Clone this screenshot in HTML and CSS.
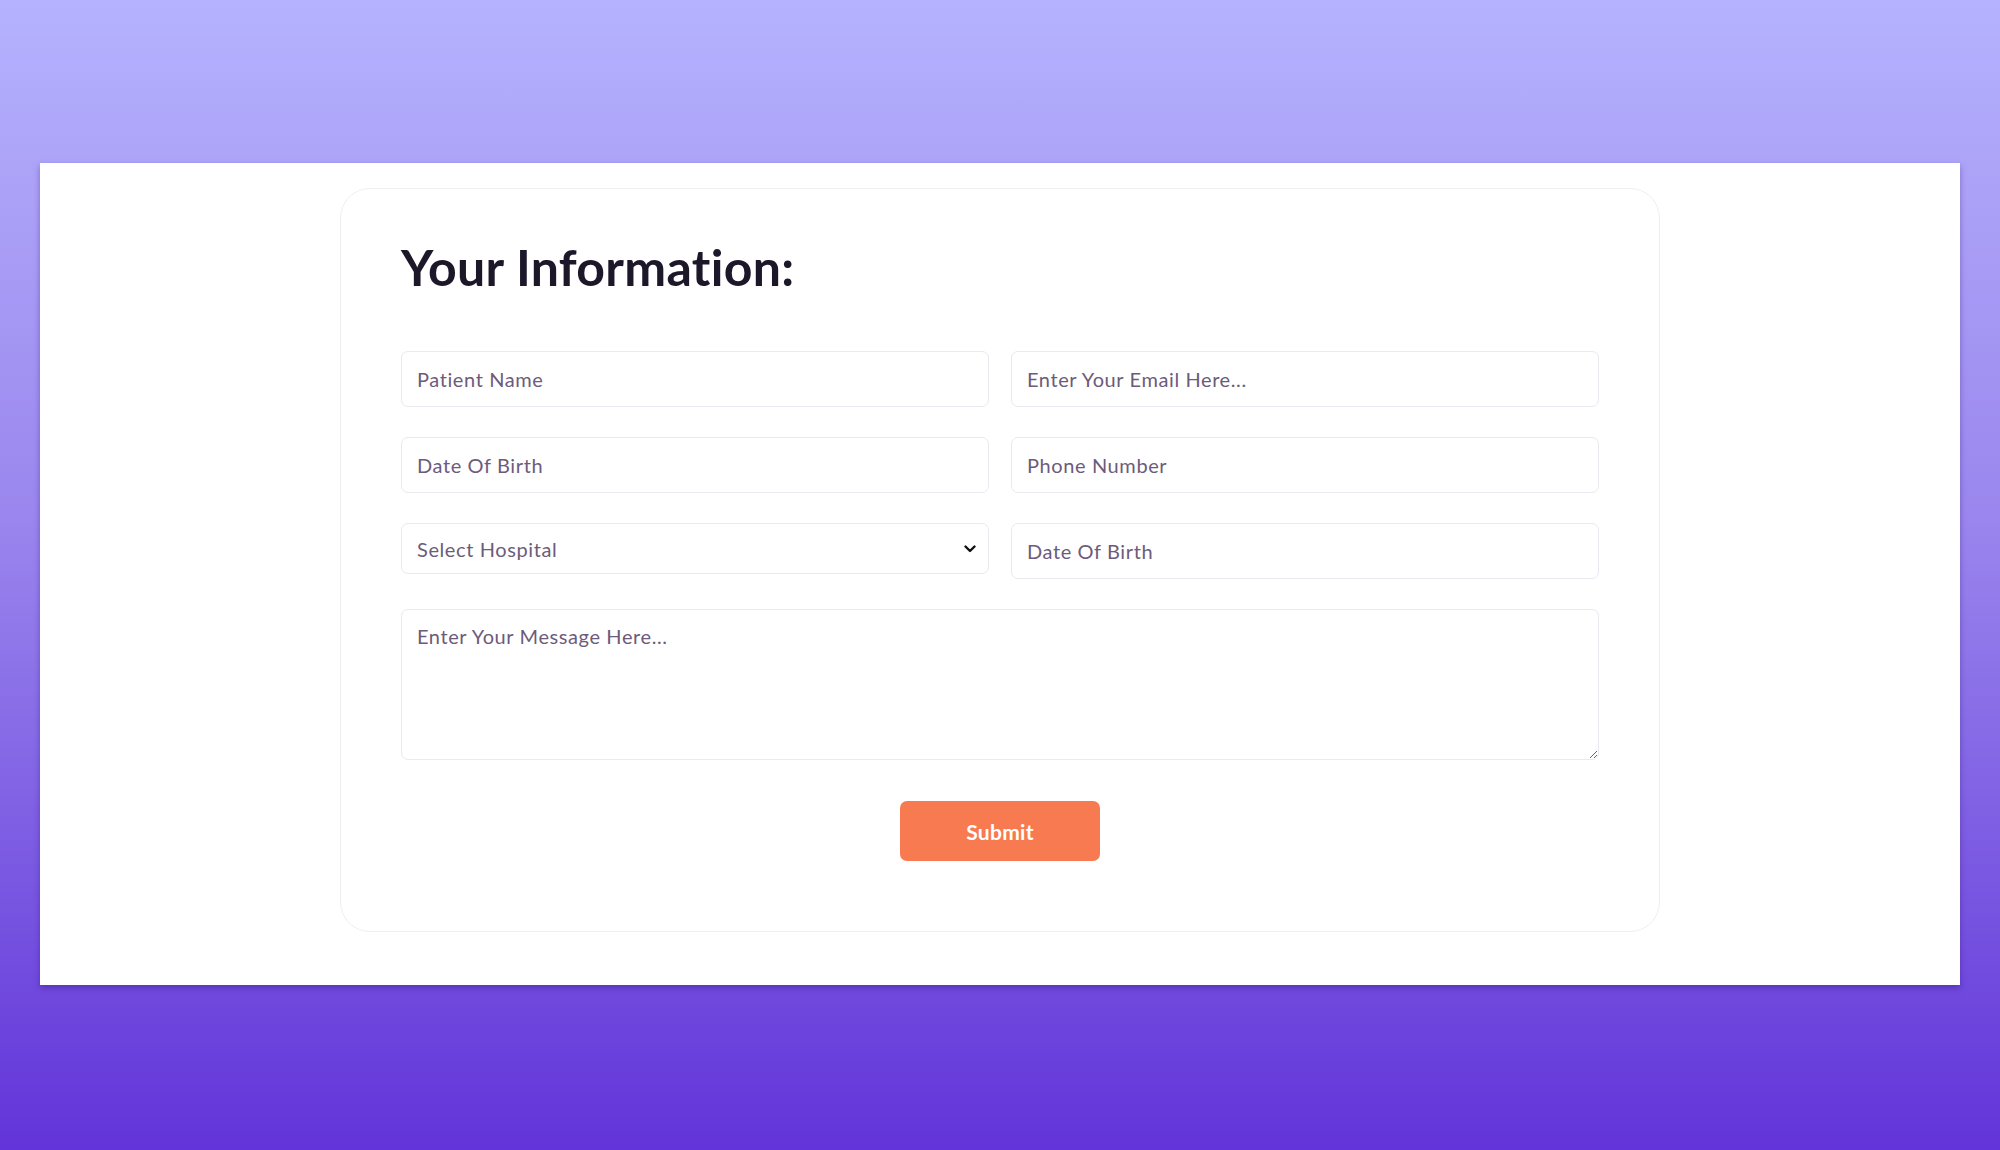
FILE: index.html
```html
<!DOCTYPE html>
<html lang="en">
<head>
<meta charset="utf-8">
<title>Your Information</title>
<link rel="stylesheet" href="styles.css">
</head>
<body>
<div class="page">
  <main class="panel">
    <form class="card">
      <h1 class="title">Your Information:</h1>
      <div class="fields">
        <input class="field" type="text" placeholder="Patient Name">
        <input class="field" type="email" placeholder="Enter Your Email Here...">
        <input class="field" type="text" placeholder="Date Of Birth">
        <input class="field" type="text" placeholder="Phone Number">
        <div class="select-wrap">
          <select class="field select">
            <option>Select Hospital</option>
          </select>
          <svg class="chevron" width="12" height="8" viewBox="0 0 12 8"><path d="M1.5 1.5 L6 6 L10.5 1.5" fill="none" stroke="#111" stroke-width="2.4" stroke-linecap="round" stroke-linejoin="round"/></svg>
        </div>
        <input class="field" type="text" placeholder="Date Of Birth">
        <textarea class="field message" placeholder="Enter Your Message Here..."></textarea>
      </div>
      <div class="actions">
        <button class="submit" type="button">Submit</button>
      </div>
    </form>
  </main>
</div>
</body>
</html>
```

FILE: styles.css
```css
html, body {
  margin: 0;
  padding: 0;
}
body {
  width: 2000px;
  height: 1150px;
  overflow: hidden;
  background: linear-gradient(180deg, #b5b3ff 0%, #ada4f8 14%, #9a86ee 45%, #7b5ae2 75%, #6234d9 100%);
  font-family: Lato, "Noto Sans", sans-serif;
}
.page {
  padding: 163px 40px 0 40px;
}
.panel {
  background: #ffffff;
  height: 822px;
  box-sizing: border-box;
  padding-top: 25px;
  box-shadow: 0 3px 6px rgba(40, 10, 110, 0.35);
  display: flex;
  justify-content: center;
  align-items: flex-start;
}
.card {
  width: 1320px;
  box-sizing: border-box;
  border: 1px solid #efeff3;
  border-radius: 30px;
  padding: 48px 60px 70px 60px;
}
.title {
  margin: 0;
  font-size: 50px;
  line-height: 60px;
  font-weight: 700;
  color: #1d1829;
  letter-spacing: 0.3px;
}
.fields {
  margin-top: 54px;
  display: grid;
  grid-template-columns: 1fr 1fr;
  column-gap: 22px;
  row-gap: 30px;
  align-items: start;
}
.field {
  display: block;
  width: 100%;
  box-sizing: border-box;
  height: 56px;
  border: 1px solid #e9e9ef;
  border-radius: 7px;
  padding: 0 15px;
  font-family: Lato, "Noto Sans", sans-serif;
  font-size: 20px;
  letter-spacing: 0.6px;
  color: #6c5b7b;
  background: #ffffff;
  outline: none;
}
.field::placeholder {
  color: #6c5b7b;
  opacity: 1;
}
.select-wrap {
  position: relative;
}
.select {
  height: 51px;
  -webkit-appearance: none;
  appearance: none;
  padding-right: 40px;
}
.chevron {
  position: absolute;
  right: 13px;
  top: 22px;
}
.message {
  grid-column: 1 / 3;
  height: 151px;
  padding: 14px 15px;
  resize: vertical;
}
.actions {
  margin-top: 41px;
  display: flex;
  justify-content: center;
}
.submit {
  width: 200px;
  height: 60px;
  border: none;
  border-radius: 7px;
  background: #f87a51;
  color: #ffffff;
  font-family: Lato, "Noto Sans", sans-serif;
  font-size: 21px;
  font-weight: 700;
  letter-spacing: 0.3px;
}
```
